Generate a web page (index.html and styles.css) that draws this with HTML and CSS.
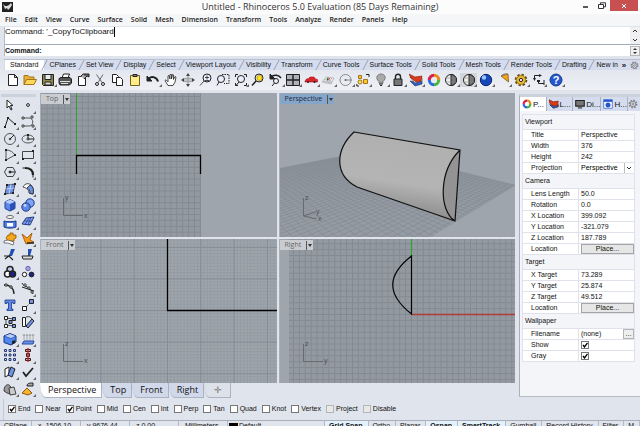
FILE: index.html
```html
<!DOCTYPE html>
<html lang="en">
<head>
  <meta charset="UTF-8">
  <meta name="viewport" content="width=device-width, initial-scale=1.0">
  <title>Untitled - Rhinoceros 5.0 Evaluation</title>
  <link rel="stylesheet" href="styles.css">
</head>
<body>
<div class="app">
  <header class="titlebar">
    <svg class="logo" viewBox="0 0 11 10"><rect width="11" height="10" fill="#222"/><path d="M1 2l2 2 2 0 2-1 2-2 1 2-2 3-2 2-1-2-2 1z" fill="#ddd"/></svg>
    <h1>Untitled - Rhinoceros 5.0 Evaluation (85 Days Remaining)</h1>
    <div class="window-buttons">
      <button aria-label="Minimize"><svg viewBox="0 0 8 8"><path d="M1 5h5" stroke="#222" stroke-width="1.5"/></svg></button>
      <button aria-label="Restore"><svg viewBox="0 0 8 8"><path d="M2.500 2V.8h5v4H6M.5 2.500h5v4h-5z" fill="none" stroke="#333"/></svg></button>
      <button class="close" aria-label="Close"><svg viewBox="0 0 8 8"><path d="M2 2l4 4M6 2l-4 4" stroke="#fff"/></svg></button>
    </div>
  </header>

  <nav class="menu">
    <a href="#">File</a><a href="#">Edit</a><a href="#">View</a><a href="#">Curve</a><a href="#">Surface</a><a href="#">Solid</a><a href="#">Mesh</a><a href="#">Dimension</a><a href="#">Transform</a><a href="#">Tools</a><a href="#">Analyze</a><a href="#">Render</a><a href="#">Panels</a><a href="#">Help</a>
  </nav>

  <section class="command">
    <div class="history">
      <span class="history-text">Command: '_CopyToClipboard</span>
      <div class="scroll">
        <svg viewBox="0 0 6 4"><path d="M1 3l2-2 2 2"/></svg>
        <svg viewBox="0 0 6 4"><path d="M1 1l2 2 2-2"/></svg>
      </div>
    </div>
    <div class="prompt">
      <label for="cmd">Command:</label>
      <input type="text" id="cmd">
      <div class="scroll spin">
        <svg viewBox="0 0 6 4"><path d="M1 3l2-2 2 2z"/></svg>
        <svg viewBox="0 0 6 4"><path d="M1 1l2 2 2-2z"/></svg>
      </div>
    </div>
  </section>

  <section class="toolbars">
    <div class="tabs">
      <button class="tab active">Standard</button><button class="tab">CPlanes</button><button class="tab">Set View</button><button class="tab">Display</button><button class="tab">Select</button><button class="tab">Viewport Layout</button><button class="tab">Visibility</button><button class="tab">Transform</button><button class="tab">Curve Tools</button><button class="tab">Surface Tools</button><button class="tab">Solid Tools</button><button class="tab">Mesh Tools</button><button class="tab">Render Tools</button><button class="tab">Drafting</button><button class="tab last">New in</button>
      <button class="overflow">»</button>
      <button class="gear" aria-label="Options"><svg viewBox="0 0 10 10"><circle cx="5" cy="5" r="3.600" stroke-dasharray="1.6 1.200" stroke-width="1.800"/><circle cx="5" cy="5" r="2.800"/><circle cx="5" cy="5" r="1"/></svg></button>
    </div>
    <div class="toolbar icons">
      <button aria-label="New"><svg viewBox="0 0 14 14"><path d="M2.500 1.500h6l3 3v8h-9zM8.500 1.500v3h3" fill="#fff"/></svg></button>
      <button aria-label="Open"><svg viewBox="0 0 14 14"><path d="M1 11.500v-9h4l1 1.500h5v3" fill="#e8b23a" stroke="#a87412"/><path d="M1 11.500L3.500 6.500H13.500L11 11.500z" fill="#ffd75e" stroke="#a87412"/></svg></button>
      <button aria-label="Save" class="more"><svg viewBox="0 0 14 14"><path d="M1.500 1.500h11v11h-10l-1-1z" fill="#8d8a4a"/><path d="M4 1.500h6v5H4z" fill="#e9ebf2"/><path d="M4 12V9h6v3z" fill="#ddd"/></svg></button>
      <button aria-label="Print"><svg viewBox="0 0 14 14"><path d="M4 5l1.500-4h6L10 5" fill="#fff"/><path d="M1 5.500l2-1h9l1.500 1.500v4l-2 2H2l-1-2z" fill="#555"/><path d="M2 8.500h10M3 10.500h7" stroke="#ddd"/></svg></button>
      <button aria-label="Document properties"><svg viewBox="0 0 14 14"><path d="M2.500 3.500h7v9h-7z" fill="#fff"/><path d="M5 3l2-2h6v3l-2-1-3 3M8 2h5" fill="#aaa"/></svg></button>
      <button aria-label="Cut"><svg viewBox="0 0 14 14"><path d="M3.500 1.500L9 9.500M10 1.500L5 9.500" stroke="#666"/><circle cx="4" cy="11" r="1.500"/><circle cx="10" cy="11" r="1.500"/></svg></button>
      <button aria-label="Copy"><svg viewBox="0 0 14 14"><path d="M1.500 1.500h4l2 2v6h-6z" fill="#fff"/><path d="M5.500 4.500h4l2 2v6h-6z" fill="#fff"/></svg></button>
      <button aria-label="Paste"><svg viewBox="0 0 14 14"><path d="M2.500 2.500h9v10h-9z" fill="#ffec8b" stroke="#77611c"/><path d="M5 1.500h4v2H5z" fill="#888"/></svg></button>
      <button aria-label="Undo" class="more"><svg viewBox="0 0 14 14"><path d="M3 5.500c3-3 8-1 9 3" stroke-width="2"/><path d="M1 3v5h5z" fill="#222"/></svg></button>
      <button aria-label="Pan"><svg viewBox="0 0 14 14"><path d="M4 12.500L1 7.500l1-.7 2 2V3l1-.6L6 6V1.500h1.500V6l1-4.500 1 .4V6.500l1.500-3 1 .6-1 5-2 3.400z" fill="#fff" stroke-width=".8"/></svg></button>
      <button aria-label="Rotate view"><svg viewBox="0 0 14 14"><ellipse cx="7" cy="7" rx="5" ry="2" stroke="#999"/><path d="M7 1v12M1 7h12" stroke="#999"/><path d="M7 0L5 3h4zM7 14l-2-3h4zM0 7l3-2v4zM14 7l-3-2v4z" fill="#444" stroke="none"/></svg></button>
      <button aria-label="Zoom dynamic"><svg viewBox="0 0 14 14"><circle cx="8" cy="5" r="4" fill="#eef"/><path d="M6 4.500h4M8 2.500v4M6 7.500h4M5 8l-4 4.500" stroke-width=".8"/></svg></button>
      <button aria-label="Zoom window"><svg viewBox="0 0 14 14"><path d="M6 1.500h7v9H8" stroke-dasharray="1.500 1"/><circle cx="5" cy="6" r="3.500" fill="#eef"/><path d="M3 9l-2 3.500"/></svg></button>
      <button aria-label="Zoom extents" class="more"><svg viewBox="0 0 14 14"><circle cx="7" cy="6" r="3.500" fill="#eef"/><path d="M5 9l-3 3.500M1.500 4V1.500H4M10 1.500h2.500V4M12.500 10v2.500H10M1.500 10v2.500H4"/></svg></button>
      <button aria-label="Zoom selected"><svg viewBox="0 0 14 14"><circle cx="8" cy="5" r="4" fill="#dde"/><circle cx="8.500" cy="5" r="2.500" fill="#ffe11f" stroke="#ccac00"/><path d="M5 8l-4 4.500" stroke-width="1.500"/></svg></button>
      <button aria-label="Undo view" class="more"><svg viewBox="0 0 14 14"><path d="M2 4c3-3 8-2 10 1" stroke-width="1.500"/><path d="M1 1v5h5z" fill="#222"/><circle cx="7" cy="8" r="2.500" fill="#eef"/><path d="M5.500 10L3 13"/></svg></button>
      <button aria-label="Four viewports" class="more"><svg viewBox="0 0 14 14"><path d="M.5 1.500h13v11H.5z" fill="#aeb2b6"/><path d="M7 1.500v11M.5 7h13" stroke-width="1.400"/></svg></button>
      <button aria-label="Right view" class="more"><svg viewBox="0 0 14 14"><path d="M1 8l1.500-2 2-.4L6 4h4l1.500 2 2 .6V9H1z" fill="#d8262b" stroke="#a51519" stroke-width=".6"/><circle cx="4" cy="9" r="1" fill="#222" stroke="none"/><circle cx="10.500" cy="9" r="1" fill="#222" stroke="none"/></svg></button>
      <button aria-label="CPlane" class="more"><svg viewBox="0 0 14 14"><path d="M1 9l4-5 8 1-3 6zM3 6.500l8 2M5 10l4-5.500M2 8l9 2M7 10.500L11 5" stroke="#aaa" stroke-width=".7"/><path d="M6 7l3-1.500" stroke="#c22"/><path d="M6 7l1-2.500" stroke="#171"/></svg></button>
      <button aria-label="Set view" class="more"><svg viewBox="0 0 14 14"><circle cx="6.500" cy="7" r="5.500" stroke="#888"/><path d="M6.500 7H13" stroke="#888"/><circle cx="6.500" cy="7" r="1" fill="#666" stroke="none"/></svg></button>
      <button aria-label="Object snap" class="more"><svg viewBox="0 0 14 14"><path d="M5.500 5.500h-3v-3h3zM7.500 6.500h4v4h-4z" fill="#ffc626" stroke="#8a5f00" stroke-width=".8"/><circle cx="4" cy="9" r="2" fill="#ffe056" stroke="#8a5f00" stroke-width=".8"/><path d="M10 1.500h3V4M.8 11v2H3"/></svg></button>
      <button aria-label="Hide" class="more"><svg viewBox="0 0 14 14"><path d="M5 8.500C1 5 3 1 7 1s6 4 2 7.500V10H5z" fill="#a9a9a9" stroke="#777"/><path d="M5 11h4M6 12.500h2"/></svg></button>
      <button aria-label="Lock" class="more"><svg viewBox="0 0 14 14"><path d="M4.500 6V3.500c0-3 5-3 5 0V6" stroke-width="1.400"/><path d="M3 6h8v6.500H3z" fill="#777"/></svg></button>
      <button aria-label="Layers" class="more"><svg viewBox="0 0 14 14"><path d="M1 8l5 5 7-2V8L7 9z" fill="#335ec4" stroke="#234" stroke-width=".6"/><path d="M1 4l5 6 7-2V5L7 6z" fill="#fff" stroke="#444" stroke-width=".6"/><path d="M0 1l6 3 7-1-1 5-5 1-5-4z" fill="#e0391b" stroke="#721" stroke-width=".6"/></svg></button>
      <button aria-label="Object properties"><svg viewBox="0 0 14 14" class="wheel"><path d="M7 2.300A4.700 4.700 0 0 1 11.700 7" stroke="#e88a1a"/><path d="M11.700 7A4.700 4.700 0 0 1 7 11.700" stroke="#48b83b"/><path d="M7 11.700A4.700 4.700 0 0 1 2.300 7" stroke="#276be0"/><path d="M2.300 7A4.700 4.700 0 0 1 7 2.300" stroke="#d6234f"/></svg></button>
      <button aria-label="Shade" class="more"><svg viewBox="0 0 14 14"><circle cx="7" cy="7" r="5.500" fill="#eee"/><path d="M7 1.500a5.500 5.500 0 0 1 0 11z" fill="#777"/><path d="M2 5h10M2 9h10" stroke="#888" stroke-width=".6"/></svg></button>
      <button aria-label="Shade viewport" class="more pressed"><svg viewBox="0 0 14 14"><circle cx="7" cy="7" r="5.500" fill="#eee"/><path d="M7 1.500a5.500 5.500 0 0 1 0 11z" fill="#777"/><path d="M2 5h10M2 9h10" stroke="#888" stroke-width=".6"/></svg></button>
      <button aria-label="Render" class="more"><svg viewBox="0 0 14 14"><circle cx="7" cy="7" r="5.700" fill="#1748bb" stroke="#0a246c"/><circle cx="5" cy="4.500" r="2.200" fill="#9cc5ff" stroke="none"/></svg></button>
      <button aria-label="Lights" class="more"><svg viewBox="0 0 14 14"><path d="M4 3l7-2 .5 8z" fill="#f2a521" stroke="#8a5710" stroke-width=".8"/><path d="M4 3l3-2h4" stroke="#777"/></svg></button>
      <button aria-label="Options" class="more"><svg viewBox="0 0 14 14"><circle cx="7" cy="7" r="5" fill="#e5b83c" stroke="#65480b" stroke-width="2.600" stroke-dasharray="2.200 1.700"/><circle cx="7" cy="7" r="4.500" fill="#e5b83c" stroke="#9a7420" stroke-width=".8"/><circle cx="7" cy="7" r="1.600" fill="#fff"/></svg></button>
      <button aria-label="Dimension" class="more"><svg viewBox="0 0 14 14"><path d="M2.500 7V2.500H9M6.500 7v3.500H12M12 7v5"/><path d="M1 5h3L2.500 8zM7 1v3l3-1.500zM5 7h3v2H5z" fill="#222" stroke="none"/></svg></button>
      <button aria-label="Help" class="more"><svg viewBox="0 0 14 14"><circle cx="7" cy="7" r="6" fill="#2457cf" stroke="#163c92"/><text class="mark" x="7" y="11" text-anchor="middle">?</text></svg></button>
    </div>
  </section>

  <main class="workspace">
    <aside class="sidebar">
      <div class="handle"></div>
      <div class="side-tools icons">
        <button aria-label="Select"><svg viewBox="0 0 14 14"><path d="M4 2v8l2-2 2 4 1-.5-1.500-4H10z" fill="#fff"/></svg></button>
        <button aria-label="Point" class="more"><svg viewBox="0 0 14 14"><circle cx="7" cy="7" r="1.400" fill="#fff"/></svg></button>
        <button aria-label="Polyline" class="more"><svg viewBox="0 0 14 14"><path d="M2 12L5 3l7 6"/><path d="M1 11h2v2H1zM4 2h2v2H4zM11 8h2v2h-2z" fill="#222" stroke="none"/></svg></button>
        <button aria-label="Curve" class="more"><svg viewBox="0 0 14 14"><path d="M2 3h6c5 0 5 8 0 8H2" stroke="#555"/><path d="M1 2h2v2H1zM10 1h2v2h-2zM1 10h2v2H1zM11 10h2v2h-2z" fill="#eee" stroke-width=".8"/></svg></button>
        <button aria-label="Circle" class="more"><svg viewBox="0 0 14 14"><circle cx="7" cy="7" r="5.500" stroke="#555"/><path d="M7 7l4-4"/><circle cx="7" cy="7" r=".8"/></svg></button>
        <button aria-label="Ellipse" class="more"><svg viewBox="0 0 14 14"><ellipse cx="7" cy="7" rx="6" ry="4" stroke="#555"/><path d="M7 7h6M7 7V3"/><circle cx="7" cy="7" r="1" fill="#fff"/><path d="M6 2h2v2H6z" fill="#222" stroke="none"/></svg></button>
        <button aria-label="Arc" class="more"><svg viewBox="0 0 14 14"><path d="M3 12V2c4 0 7 2 9 5L3 12" stroke="#555"/><path d="M2 1h2v2H2zM2 11h2v2H2zM11 6h2v2h-2z" fill="#222" stroke="none"/></svg></button>
        <button aria-label="Rectangle" class="more"><svg viewBox="0 0 14 14"><path d="M1.500 3.500h11v7h-11z" stroke="#444"/><path d="M11 2h2v2h-2zM1 10h2v2H1z" fill="#222" stroke="none"/></svg></button>
        <button aria-label="Polygon" class="more"><svg viewBox="0 0 14 14"><path d="M4 2.500h6L12.500 7 10 11.500H4L1.500 7z" stroke="#444"/><path d="M7 7h5"/><circle cx="7" cy="7" r="1" fill="#222"/></svg></button>
        <button aria-label="Fillet" class="more"><svg viewBox="0 0 14 14"><path d="M1.500 3H4M12 9v3.500"/><path d="M4 3c5 0 8 2 8 7" stroke-width="2.200"/></svg></button>
        <button aria-label="Surface from points" class="more"><svg viewBox="0 0 14 14"><path d="M4 3l8-1-2 9-8 1z" fill="#6d93ea" stroke-width=".8"/><path d="M3 7l8-1M8 2L6 12" stroke="#dce6ff" stroke-width=".7"/><path d="M3 2h2v2H3zM11 1h2v2h-2zM9 10h2v2H9zM1 11h2v2H1z" fill="#222" stroke="none"/></svg></button>
        <button aria-label="Surface fillet" class="more"><svg viewBox="0 0 14 14"><path d="M2 5c2-4 6-4 8-2 2 2 3 5 2 9l-4-1c0-3-2-5-6-6z" fill="#fff" stroke-width=".8"/><path d="M6 6l3-3c3 1 4 5 3 9l-3-.5C9 8 8 7 6 6z" fill="#6d93ea" stroke-width=".8"/></svg></button>
        <button aria-label="Box" class="more"><svg viewBox="0 0 14 14"><path d="M2 4l5-2.500 5 2.500v6.500l-5 2.500-5-2.500z" fill="#5f88ea" stroke="#1e3e94"/><path d="M2 4l5-2.500L12 4 7 6z" fill="#b7ccff" stroke="none"/><path d="M7 6v7l5-2.500V4z" fill="#2850b5" stroke="none"/></svg></button>
        <button aria-label="Boolean" class="more"><svg viewBox="0 0 14 14"><circle cx="9" cy="5" r="4.200" fill="#7fa3f5" stroke="#1c3784"/><circle cx="5" cy="9" r="4.200" fill="#5f88ea" stroke="#1c3784"/><circle cx="4" cy="7.500" r="1.400" fill="#c4d6ff" stroke="none"/></svg></button>
        <button aria-label="Project" class="more"><svg viewBox="0 0 14 14"><ellipse cx="7" cy="2" rx="3.500" ry="1.500" fill="#fff" stroke="#666"/><path d="M1 6c3 1 9 1 12 0v6c-3 1.500-9 1.500-12 0z" fill="#4f7fe8" stroke="#1c3784"/><path d="M4 8h6v3.500H4z" fill="#fff" stroke="none"/></svg></button>
        <button aria-label="Mesh" class="more"><svg viewBox="0 0 14 14"><path d="M1 9l4-6 8-1-4 8z" fill="#7ea1f2" stroke="#223a80"/><path d="M3 6l8 0M4 9.500L8 3M7 10l3-8" stroke="#223a80" stroke-width=".7"/></svg></button>
        <button aria-label="Explode"><svg viewBox="0 0 14 14"><path d="M5 3h2V1h3v2h3v3l-2 1v2H5L3 6z" fill="#f5a81c" stroke="#8a5106" stroke-width=".8"/><path d="M1 9l4-1 6 2-1 3-5-2-4 0z" fill="#fff" stroke="#555" stroke-width=".8"/></svg></button>
        <button aria-label="Trim edge" class="more"><svg viewBox="0 0 14 14"><path d="M1 2l5 4 5-5-2 7 4 2-8 2z" fill="#f79b15" stroke="#9c4b04" stroke-width=".8"/><path d="M6 11h7" stroke-width="1.500"/></svg></button>
        <button aria-label="Trim"><svg viewBox="0 0 14 14"><path d="M8 1h4L9 8H6z" fill="#244fb0" stroke="none"/><path d="M1 8h5l4 4M2 11l5-4" stroke-width="1.200"/></svg></button>
        <button aria-label="Split"><svg viewBox="0 0 14 14"><path d="M7 1h4L9 8H7z" fill="#244fb0" stroke="none"/><path d="M1 8h11l-1 3H2z" fill="#ddd"/></svg></button>
        <button aria-label="Group" class="more"><svg viewBox="0 0 14 14"><circle cx="7" cy="4.500" r="3" fill="#c5c9ef" stroke-width="1.500"/><circle cx="4.500" cy="9" r="3" fill="#fff" stroke-width="1.500"/><circle cx="9.500" cy="9" r="3" fill="#1b2482" stroke-width="1.500"/></svg></button>
        <button aria-label="Ungroup"><svg viewBox="0 0 14 14"><circle cx="7" cy="3.500" r="2.200" fill="#a5a0e5" stroke="#66a"/><circle cx="3.500" cy="9.500" r="2.200" fill="#fff"/><circle cx="10.500" cy="9.500" r="2.400" fill="#1b2482"/></svg></button>
        <button aria-label="Edit points"><svg viewBox="0 0 14 14"><path d="M1 3c6 0 10 3 10 9" stroke-width="1.300"/><circle cx="3" cy="3" r="1.200" fill="#fff"/><circle cx="8" cy="5" r="1.200" fill="#fff"/></svg></button>
        <button aria-label="Rebuild" class="more"><svg viewBox="0 0 14 14"><path d="M1 1c1 4 9 3 11 11M1 5l12 4" stroke-width="1"/><path d="M3 2h2v2H3zM7 5h2v2H7zM10 9h2v2h-2z" fill="#fff" stroke-width=".8"/></svg></button>
        <button aria-label="Text"><svg viewBox="0 0 14 14"><path d="M2 2h10v3.500h-2V4.500H8.500V11H10v1.500H4V11h1.500V4.500H4v1H2z" fill="#5f88ea" stroke="#1c3784" stroke-width=".8"/></svg></button>
        <button aria-label="Move" class="more"><svg viewBox="0 0 14 14"><path d="M8.500 1.500h4v4h-4z" fill="#6d93ea"/><path d="M1.500 8.500h4v4h-4z" fill="#fff"/><path d="M5 9l4-4" stroke-dasharray="1 1"/></svg></button>
        <button aria-label="Copy objects"><svg viewBox="0 0 14 14"><path d="M3 3l8 1-4 3 4 4-8-1z" stroke-width=".8"/><path d="M1.500 1.500h3v3h-3zM1.500 9.500h3v3h-3z" fill="#fff"/><path d="M9.500 2.500h3v3h-3zM6 5.500h3v3H6zM9.500 9.500h3v3h-3z" fill="#6d93ea"/></svg></button>
        <button aria-label="Rotate"><svg viewBox="0 0 14 14"><path d="M1.500 2.500h3v9h-3z" fill="#fff"/><path d="M11 4l2 2-6 7-2-2z" fill="#6d93ea"/><path d="M5 2c3-1 5 0 6 2" stroke-width=".8"/></svg></button>
        <button aria-label="Solid" class="more"><svg viewBox="0 0 14 14"><path d="M1 4l6-2.500 6 2.500v6l-5 3-7-2.500z" fill="#4f86f0" stroke="#1c3784"/><path d="M1 4l6-2.500L13 4 8 6.500z" fill="#b8d0ff" stroke="#1c3784" stroke-width=".6"/><path d="M9 9l3-1v3l-3 1.500z" fill="#222" stroke="none"/></svg></button>
        <button aria-label="Extrude" class="more"><svg viewBox="0 0 14 14"><path d="M3 8V3M6 8V3M9 8V3M12 8V3M2 4l1-2 1 2M5 4l1-2 1 2M8 4l1-2 1 2M11 4l1-2 1 2" stroke="#999" stroke-width=".8"/><path d="M1 12l2-3h10l-1 3z" fill="#6d93ea" stroke="#2448a0"/></svg></button>
        <button aria-label="Array" class="more"><svg viewBox="0 0 14 14"><path d="M1.500 1.500h2v2h-2zM6 1.500h2v2H6zM10.500 1.500h2v2h-2zM1.500 6h2v2h-2zM6 6h2v2H6zM10.500 6h2v2h-2zM1.500 10.500h2v2h-2zM6 10.500h2v2H6zM10.500 10.500h2v2h-2z" fill="#cfd8f5" stroke="#24386e"/></svg></button>
        <button aria-label="Align" class="more"><svg viewBox="0 0 14 14"><path d="M4.500 1.500h5v2h-5zM5.500 5.500h3v3h-3zM4.500 10.500h5v2h-5z" fill="#bbb"/><path d="M7 0v14" stroke="#e11" stroke-width="1.400"/></svg></button>
        <button aria-label="Flow" class="more"><svg viewBox="0 0 14 14"><path d="M2 4l4-2v8l-4 2z" fill="#fff"/><path d="M8 2l4 2-3 8-4-2z" fill="#6d93ea"/></svg></button>
        <button aria-label="Check" class="more"><svg viewBox="0 0 14 14"><path d="M2 7l3 4 7-8" stroke-width="1.800"/></svg></button>
        <button aria-label="Primitives" class="more"><svg viewBox="0 0 14 14"><path d="M1 9c0-8 7-8 7-2v5L4 11z" fill="#999" stroke-width=".8"/><path d="M6 6l5-1 2 7-6 1z" fill="#ccc" stroke-width=".8"/></svg></button>
        <button aria-label="Spotlight" class="more"><svg viewBox="0 0 14 14"><path d="M6 6l5 5-4 2-6-2z" fill="#f7b22e" stroke="#8a5710"/><path d="M6 4c0-3 3-3 6-3v3z" fill="#aaa"/></svg></button>
      </div>
    </aside>

    <section class="center">
      <div class="viewports">
        <div class="viewport">
          <button class="view-title">Top<i></i></button>
          <svg viewBox="0 0 236 144" preserveAspectRatio="xMinYMin slice">
            <defs>
              <pattern id="grid" width="5.900" height="5.900" x="35" y="62" patternUnits="userSpaceOnUse"><path d="M0 .5h6M.5 0v6" stroke="#838a91"/></pattern>
            </defs>
            <rect width="160" height="144" fill="#9299a1"/>
            <rect width="160" height="144" fill="url(#grid)"/>
            <path d="M35.500 0v62" stroke="#2ea22e"/>
            <path d="M35.500 81V62.500h124V81" stroke="#000" fill="none" stroke-width="1.300"/>
            <path d="M22.500 105v17.500H42" class="axis"/>
            <text x="24" y="107">y</text><text x="43" y="125">x</text>
          </svg>
        </div>
        <div class="viewport current">
          <button class="view-title">Perspective<i></i></button>
          <svg viewBox="0 0 236 144" preserveAspectRatio="xMinYMin slice">
            <defs>
              <linearGradient id="shade" x1="0" y1="0" x2="-.2" y2="1"><stop offset="0" stop-color="#b0b0b0"/><stop offset=".45" stop-color="#b4b4b4"/><stop offset=".62" stop-color="#a0a0a0"/><stop offset="1" stop-color="#747474"/></linearGradient>
              <clipPath id="floor"><path d="M0 75L93 57L236 92L151 144H0z"/></clipPath>
            </defs>
            <path d="M0 75L93 57L236 92L151 144H0z" fill="#949ba3"/>
            <path id="floor-grid" clip-path="url(#floor)" stroke="#838a92" stroke-width=".6"/>
            <path d="M74 39L180 57L175 128L77 94C54 82 55 57 74 39z" fill="url(#shade)"/>
            <path d="M180 57L175 128C159 118 158 79 180 57z" fill="#939393"/>
            <path d="M74 39L180 57L175 128L77 94C54 82 55 57 74 39zM175 128C159 118 158 79 180 57" stroke="#111" fill="none" stroke-width="1.200"/>
            <path d="M23.500 105v18l12-4M23.500 123l13 3" class="axis"/>
            <text x="25" y="107">z</text><text x="36" y="121">y</text><text x="38" y="128">x</text>
          </svg>
        </div>
        <div class="viewport">
          <button class="view-title">Front<i></i></button>
          <svg viewBox="0 0 236 144" preserveAspectRatio="xMinYMin slice">
            <defs>
              <pattern id="fine" width="3.330" height="3.160" x="126" y="71" patternUnits="userSpaceOnUse"><path d="M0 .5h4M.5 0v4" stroke="#929aa1" stroke-width=".8"/></pattern>
              <pattern id="major" width="33.300" height="31.600" x="126" y="71" patternUnits="userSpaceOnUse"><path d="M0 .5h34M.5 0v32" stroke="#858c94"/></pattern>
            </defs>
            <rect width="236" height="144" fill="url(#fine)"/>
            <rect width="236" height="144" fill="url(#major)"/>
            <path d="M126.500 0v71.500H236" stroke="#000" fill="none" stroke-width="1.300"/>
            <path d="M22.500 105v17.500H42" class="axis"/>
            <text x="24" y="107">z</text><text x="43" y="124">x</text>
          </svg>
        </div>
        <div class="viewport">
          <button class="view-title">Right<i></i></button>
          <svg viewBox="0 0 236 144" preserveAspectRatio="xMinYMin slice">
            <defs>
              <pattern id="grid-right" width="5.900" height="5.900" x="131" y="75" patternUnits="userSpaceOnUse"><path d="M0 .5h6M.5 0v6" stroke="#838a91"/></pattern>
            </defs>
            <rect x="9" width="227" height="144" fill="#9299a1"/>
            <rect x="9" width="227" height="144" fill="url(#grid-right)"/>
            <path d="M131.500 0v17" stroke="#2ea22e" stroke-width="1.300"/>
            <path d="M131.500 75.500H236" stroke="#b03c38" stroke-width="1.300"/>
            <path d="M131.500 17v58C106 55 107 36 131.500 17z" stroke="#000" fill="none" stroke-width="1.200"/>
            <path d="M23.500 105v17.500H43" class="axis"/>
            <text x="25" y="107">z</text><text x="44" y="124">y</text>
          </svg>
        </div>
      </div>
      <div class="view-tabs">
        <button class="active">Perspective</button><button>Top</button><button>Front</button><button>Right</button><button class="add">✛</button>
      </div>
    </section>

    <aside class="panel">
      <div class="panel-tabs">
        <button class="active"><svg viewBox="0 0 14 14" class="wheel"><path d="M7 2.300A4.700 4.700 0 0 1 11.700 7" stroke="#e88a1a"/><path d="M11.700 7A4.700 4.700 0 0 1 7 11.700" stroke="#48b83b"/><path d="M7 11.700A4.700 4.700 0 0 1 2.300 7" stroke="#276be0"/><path d="M2.300 7A4.700 4.700 0 0 1 7 2.300" stroke="#d6234f"/></svg>P...</button>
        <button><svg viewBox="0 0 14 14"><path d="M1 8l5 5 7-2V8L7 9z" fill="#335ec4" stroke="#234"/><path d="M0 1l6 3 7-1-1 6-5 1-6-4z" fill="#e0391b" stroke="#721"/></svg>L...</button>
        <button><svg viewBox="0 0 14 14"><path d="M1 2h12v8H1z" fill="#777" stroke="#222" stroke-width="1.500"/><path d="M4 12.500h6" stroke="#222" stroke-width="1.500"/></svg>Di...</button>
        <button><svg viewBox="0 0 14 14"><path d="M1 1h12v12H1z" fill="#fff" stroke="#2457cf"/><path d="M1 1h12v3H1z" fill="#2457cf"/><circle cx="7" cy="8.500" r="3.500" fill="#2457cf"/></svg>H...</button>
        <button class="gear" aria-label="Panel options"><svg viewBox="0 0 10 10"><circle cx="5" cy="5" r="3.600" stroke-dasharray="1.600 1.200" stroke-width="1.800"/><circle cx="5" cy="5" r="2.800"/><circle cx="5" cy="5" r="1"/></svg></button>
      </div>
      <table class="props">
        <tr class="group"><th colspan="2">Viewport</th></tr>
        <tr><td>Title</td><td>Perspective</td></tr>
        <tr><td>Width</td><td>376</td></tr>
        <tr><td>Height</td><td>242</td></tr>
        <tr><td><label for="projection">Projection</label></td><td><select id="projection"><option>Perspective</option><option>Parallel</option></select></td></tr>
        <tr class="group"><th colspan="2">Camera</th></tr>
        <tr><td>Lens Length</td><td>50.0</td></tr>
        <tr><td>Rotation</td><td>0.0</td></tr>
        <tr><td>X Location</td><td>399.092</td></tr>
        <tr><td>Y Location</td><td>-321.079</td></tr>
        <tr><td>Z Location</td><td>187.789</td></tr>
        <tr><td>Location</td><td><button class="place">Place...</button></td></tr>
        <tr class="group"><th colspan="2">Target</th></tr>
        <tr><td>X Target</td><td>73.289</td></tr>
        <tr><td>Y Target</td><td>25.874</td></tr>
        <tr><td>Z Target</td><td>49.512</td></tr>
        <tr><td>Location</td><td><button class="place">Place...</button></td></tr>
        <tr class="group"><th colspan="2">Wallpaper</th></tr>
        <tr><td>Filename</td><td><div class="file">(none)<button>...</button></div></td></tr>
        <tr><td><label for="show">Show</label></td><td><input type="checkbox" id="show" checked></td></tr>
        <tr><td><label for="gray">Gray</label></td><td><input type="checkbox" id="gray" checked></td></tr>
      </table>
    </aside>
  </main>

  <section class="osnap">
    <label><input type="checkbox" checked>End</label>
    <label><input type="checkbox">Near</label>
    <label><input type="checkbox" checked>Point</label>
    <label><input type="checkbox">Mid</label>
    <label><input type="checkbox">Cen</label>
    <label><input type="checkbox">Int</label>
    <label><input type="checkbox">Perp</label>
    <label><input type="checkbox">Tan</label>
    <label><input type="checkbox">Quad</label>
    <label><input type="checkbox">Knot</label>
    <label><input type="checkbox">Vertex</label>
    <label><input type="checkbox" class="dim">Project</label>
    <label><input type="checkbox" class="dim">Disable</label>
  </section>

  <footer class="status">
    <span>CPlane</span>
    <span class="coord">x -1506.10</span>
    <span class="coord">y 9676.44</span>
    <span class="coord">z 0.00</span>
    <span class="coord">Millimeters</span>
    <span class="layer"><i></i>Default</span>
    <button class="on">Grid Snap</button>
    <button>Ortho</button>
    <button>Planar</button>
    <button class="on">Osnap</button>
    <button class="on">SmartTrack</button>
    <button>Gumball</button>
    <button>Record History</button>
    <button>Filter</button>
    <button>M</button>
  </footer>
</div>

<script>
  // floor grid of the perspective view, two sets of lines to their vanishing points
  let d = '';
  for (let x = -350; x <= 445; x += 11) {
    d += `M388 0L${x} 144M-138 0L${x} 144`;
  }
  document.getElementById('floor-grid').setAttribute('d', d);
</script>
</body>
</html>
```
FILE: styles.css
```css
* {
  box-sizing: border-box;
}

body {
  margin: 0;
  height: 100vh;
  overflow: hidden;
  font-family: "Liberation Sans", Arial, sans-serif;
  font-size: 7px;
  color: #111;
  background: #e0e4ec;
}

button {
  font: inherit;
  color: inherit;
  padding: 0;
  border: 0;
  background: none;
}

svg {
  display: block;
}

/* the status bar runs under the bottom edge of the window */
.app {
  height: calc(100vh + 8px);
  display: flex;
  flex-direction: column;
}

.titlebar {
  height: 14px;
  flex: none;
  display: grid;
  grid-template-columns: 60px 1fr 60px;
  align-items: start;
  padding: 0 2px;
  background: #fcfcfd;
}

.logo {
  width: 11px;
  height: 10px;
  margin-top: 2px;
}

.titlebar h1 {
  margin: 0;
  font: 9px/14px "Open Sans", sans-serif;
  text-align: center;
  color: #333;
}

.window-buttons {
  display: flex;
  justify-content: flex-end;
}

.window-buttons button {
  width: 16px;
  height: 11px;
  display: flex;
  align-items: center;
  justify-content: center;
}

.window-buttons svg {
  width: 8px;
  height: 8px;
}

.window-buttons .close {
  width: 28px;
  flex: none;
  background: #c75050;
}

.menu {
  height: 12px;
  flex: none;
  display: flex;
  gap: 8px;
  padding-left: 5px;
  font: 600 7px/12px "Open Sans", sans-serif;
  background: #f5f6f8;
}

.menu a {
  color: #222;
  text-decoration: none;
}

.command {
  flex: none;
  margin: 1px 0 2px 4px;
  border-left: 1px solid #b4bac6;
  background: #fff;
}

.history {
  height: 18px;
  display: flex;
  justify-content: space-between;
  border-bottom: 1px solid #a3abbd;
}

.history-text {
  height: 10px;
  font-size: 8px;
  line-height: 10px;
  border-right: 1px solid #000;
}

.prompt {
  height: 11px;
  display: flex;
  align-items: center;
}

.prompt label {
  font-weight: bold;
}

.prompt input {
  flex: 1;
  min-width: 0;
  height: 10px;
  border: 0;
  outline: 0;
  font-size: 7px;
}

.scroll {
  width: 10px;
  display: flex;
  flex-direction: column;
  justify-content: space-around;
  align-items: center;
  background: #f0f0f2;
}

.scroll svg {
  width: 6px;
  height: 4px;
  fill: none;
  stroke: #333;
}

.spin {
  border: 1px solid #b8b8b8;
}

.spin svg {
  fill: #333;
  stroke: none;
}

.toolbars {
  flex: none;
  padding-left: 4px;
  background: linear-gradient(#dde1ea, #eef0f5);
}

.tabs {
  height: 11px;
  margin-top: 1px;
  padding-left: 1px;
  display: flex;
  background: #d5dced;
  border-top: 1px solid #b9c0cf;
}

.tab {
  position: relative;
  flex: none;
  height: 10px;
  padding: 0 5px;
  line-height: 10px;
}

.tab::after {
  content: "";
  position: absolute;
  right: -1px;
  top: 0;
  height: 10px;
  border-right: 1px solid #98a1b5;
  transform: skewX(-28deg);
}

.tab.active {
  padding-right: 6px;
  background: #fff;
}

.tab.last {
  flex: 1;
  padding-right: 0;
  text-align: left;
}

.tab.last::after {
  display: none;
}

.overflow {
  width: 10px;
  font-weight: bold;
  font-size: 8px;
  line-height: 9px;
}

.gear svg {
  width: 9px;
  height: 9px;
  margin: 0 1px;
  fill: none;
  stroke: #888;
  stroke-width: 1;
}

.toolbar {
  display: grid;
  grid-template-columns: repeat(32, 1fr);
  padding-right: 75px;
  height: 20px;
  align-items: center;
}

.icons button {
  position: relative;
  display: flex;
  align-items: center;
  justify-content: center;
}

.icons svg {
  width: 14px;
  height: 14px;
  fill: none;
  stroke: #222;
}

.icons .wheel,
.panel-tabs .wheel {
  fill: none;
  stroke-width: 3;
}

.icons .more::after {
  content: "";
  position: absolute;
  right: 0;
  bottom: 0;
  border-left: 3px solid transparent;
  border-bottom: 3px solid #666;
}

.icons .pressed {
  background: #d2d5da;
}

.mark {
  font: bold 11px "Liberation Sans", sans-serif;
  fill: #fff;
  stroke: none;
}

.workspace {
  flex: 1;
  min-height: 0;
  display: grid;
  grid-template-columns: 36px 1fr 121px;
  column-gap: 4px;
}

.sidebar {
  display: flex;
  flex-direction: column;
  padding: 4px 0 2px 1px;
}

.handle {
  height: 3px;
  background: #cdd1da;
}

.side-tools {
  flex: 1;
  display: grid;
  grid-template-columns: 18px 17px;
  grid-template-rows: repeat(18, 1fr);
}

.center {
  display: flex;
  flex-direction: column;
  padding-top: 3px;
  min-width: 0;
}

.viewports {
  flex: 1;
  min-height: 0;
  display: grid;
  grid-template-columns: 1fr 1fr;
  grid-template-rows: 1fr 1fr;
  gap: 2px;
}

.viewport {
  position: relative;
  overflow: hidden;
  min-height: 0;
  background: #9ea5ac;
  border-left: 1px solid #aab0b8;
}

.viewport > svg {
  width: 100%;
  height: 100%;
  font: 7px "Liberation Sans", sans-serif;
  fill: #4c5156;
}

.axis {
  fill: none;
  stroke: #666b70;
}

.view-title {
  position: absolute;
  left: 0;
  top: 1px;
  height: 10px;
  display: flex;
  align-items: center;
  padding-left: 5px;
  gap: 5px;
  color: #666;
  font: 7px/10px "Open Sans", sans-serif;
  background: #c9cdd1;
}

.view-title i {
  width: 7px;
  height: 9px;
  border-left: 1px solid #555;
  display: flex;
  align-items: center;
  justify-content: center;
}

.view-title i::before {
  content: "";
  border: 2px solid transparent;
  border-top: 3px solid #333;
  border-bottom: 0;
}

.current .view-title {
  color: #1d2a3c;
  background: #85a6c9;
}

.view-tabs {
  height: 16px;
  display: flex;
  align-items: flex-start;
  font: 9px/14px "Open Sans", sans-serif;
}

.view-tabs button {
  height: 15px;
  padding: 0 5px 0 8px;
  border-right: 1px solid #aab2c4;
  border-bottom: 1px solid #aab2c4;
  border-bottom-left-radius: 6px 14px;
  background: #d0d8ea;
}

.view-tabs .active {
  background: #fff;
}

.view-tabs .add {
  color: #777;
  background: #dde1ea;
  padding: 0 8px 0 10px;
}

.panel {
  margin: 4px 0 2px;
  border-left: 1px solid #a9afbc;
  border-top: 3px solid #cdd1da;
  border-bottom: 1px solid #b4bac6;
  background: #f4f5f8;
}

.panel-tabs {
  height: 14px;
  display: flex;
  align-items: stretch;
  background: #d5dced;
  font-size: 8px;
}

.panel-tabs button {
  flex: 1;
  display: flex;
  align-items: center;
  gap: 1px;
  padding-left: 2px;
  border-right: 1px solid #a9b1c3;
}

.panel-tabs .active {
  background: #fff;
}

.panel-tabs svg {
  width: 10px;
  height: 10px;
}

.panel-tabs .gear {
  flex: none;
  width: 12px;
  padding: 0;
  border: 0;
}

.panel-tabs .gear svg {
  margin: 0;
}

.props {
  width: calc(100% - 7px);
  margin: 3px 5px 0 2px;
  table-layout: fixed;
  border-collapse: collapse;
  line-height: 10px;
  background: #fff;
}

.props td,
.props th {
  height: 11px;
  padding: 0 0 0 8px;
  text-align: left;
  font-weight: normal;
  border: 1px solid #dfe2ea;
  white-space: nowrap;
}

.props .group th {
  height: 15px;
  padding-left: 2px;
  background: #f4f5f8;
}

.props td + td {
  padding-left: 2px;
}

.props select {
  display: block;
  width: 100%;
  height: 10px;
  padding: 0;
  border: 0;
  font: inherit;
  appearance: none;
  background: url("data:image/svg+xml,%3Csvg xmlns='http://www.w3.org/2000/svg' width='10' height='10'%3E%3Cpath d='M.5 0v10' stroke='%23bbb'/%3E%3Cpath d='M3 4l2 2 2-2' fill='none' stroke='%23333'/%3E%3C/svg%3E") right center no-repeat;
}

.props .place {
  display: block;
  width: 100%;
  height: 10px;
  line-height: 8px;
  border: 1px solid #a4a4a4;
  background: #e6e6e6;
}

.file {
  display: flex;
  justify-content: space-between;
}

.file button {
  width: 11px;
  height: 10px;
  line-height: 6px;
  border: 1px solid #b4b4b4;
  background: #eee;
}

input[type="checkbox"] {
  appearance: none;
  display: block;
  width: 8px;
  height: 8px;
  margin: 0;
  border: 1px solid #777;
  background: #fff;
}

input[type="checkbox"]:checked {
  background: #fff url("data:image/svg+xml,%3Csvg xmlns='http://www.w3.org/2000/svg' viewBox='0 0 6 6'%3E%3Cpath d='M1 3l1.500 2L5.500.8' fill='none' stroke='%23000' stroke-width='1.300'/%3E%3C/svg%3E") center / 6px 6px no-repeat;
}

input[type="checkbox"].dim {
  border-color: #b5b5b5;
  background: #e8e8e8;
}

.osnap {
  height: 21px;
  flex: none;
  display: flex;
  align-items: center;
  gap: 5px;
  padding: 0 0 2px 4px;
  margin-left: 3px;
  border-left: 1px solid #c4c9d4;
}

.osnap label {
  display: flex;
  align-items: center;
  gap: 2px;
}

.status {
  height: 14px;
  flex: none;
  display: flex;
  border-top: 1px solid #a9afbc;
  white-space: nowrap;
}

.status > * {
  flex: none;
  height: 13px;
  padding: 0 4px;
  line-height: 10px;
  border-right: 1px solid #b4bac6;
}

.status button {
  display: flex;
  align-items: flex-start;
  padding-right: 5px;
}

.status .coord {
  width: 49px;
  padding-left: 6px;
}

.status .layer {
  flex: 1;
  display: flex;
  gap: 1px;
  padding-left: 1px;
}

.layer i {
  width: 9px;
  height: 8px;
  margin-top: 2px;
  background: #000;
}

.status .on {
  font-weight: bold;
  background: #e3f1fb;
}
```
